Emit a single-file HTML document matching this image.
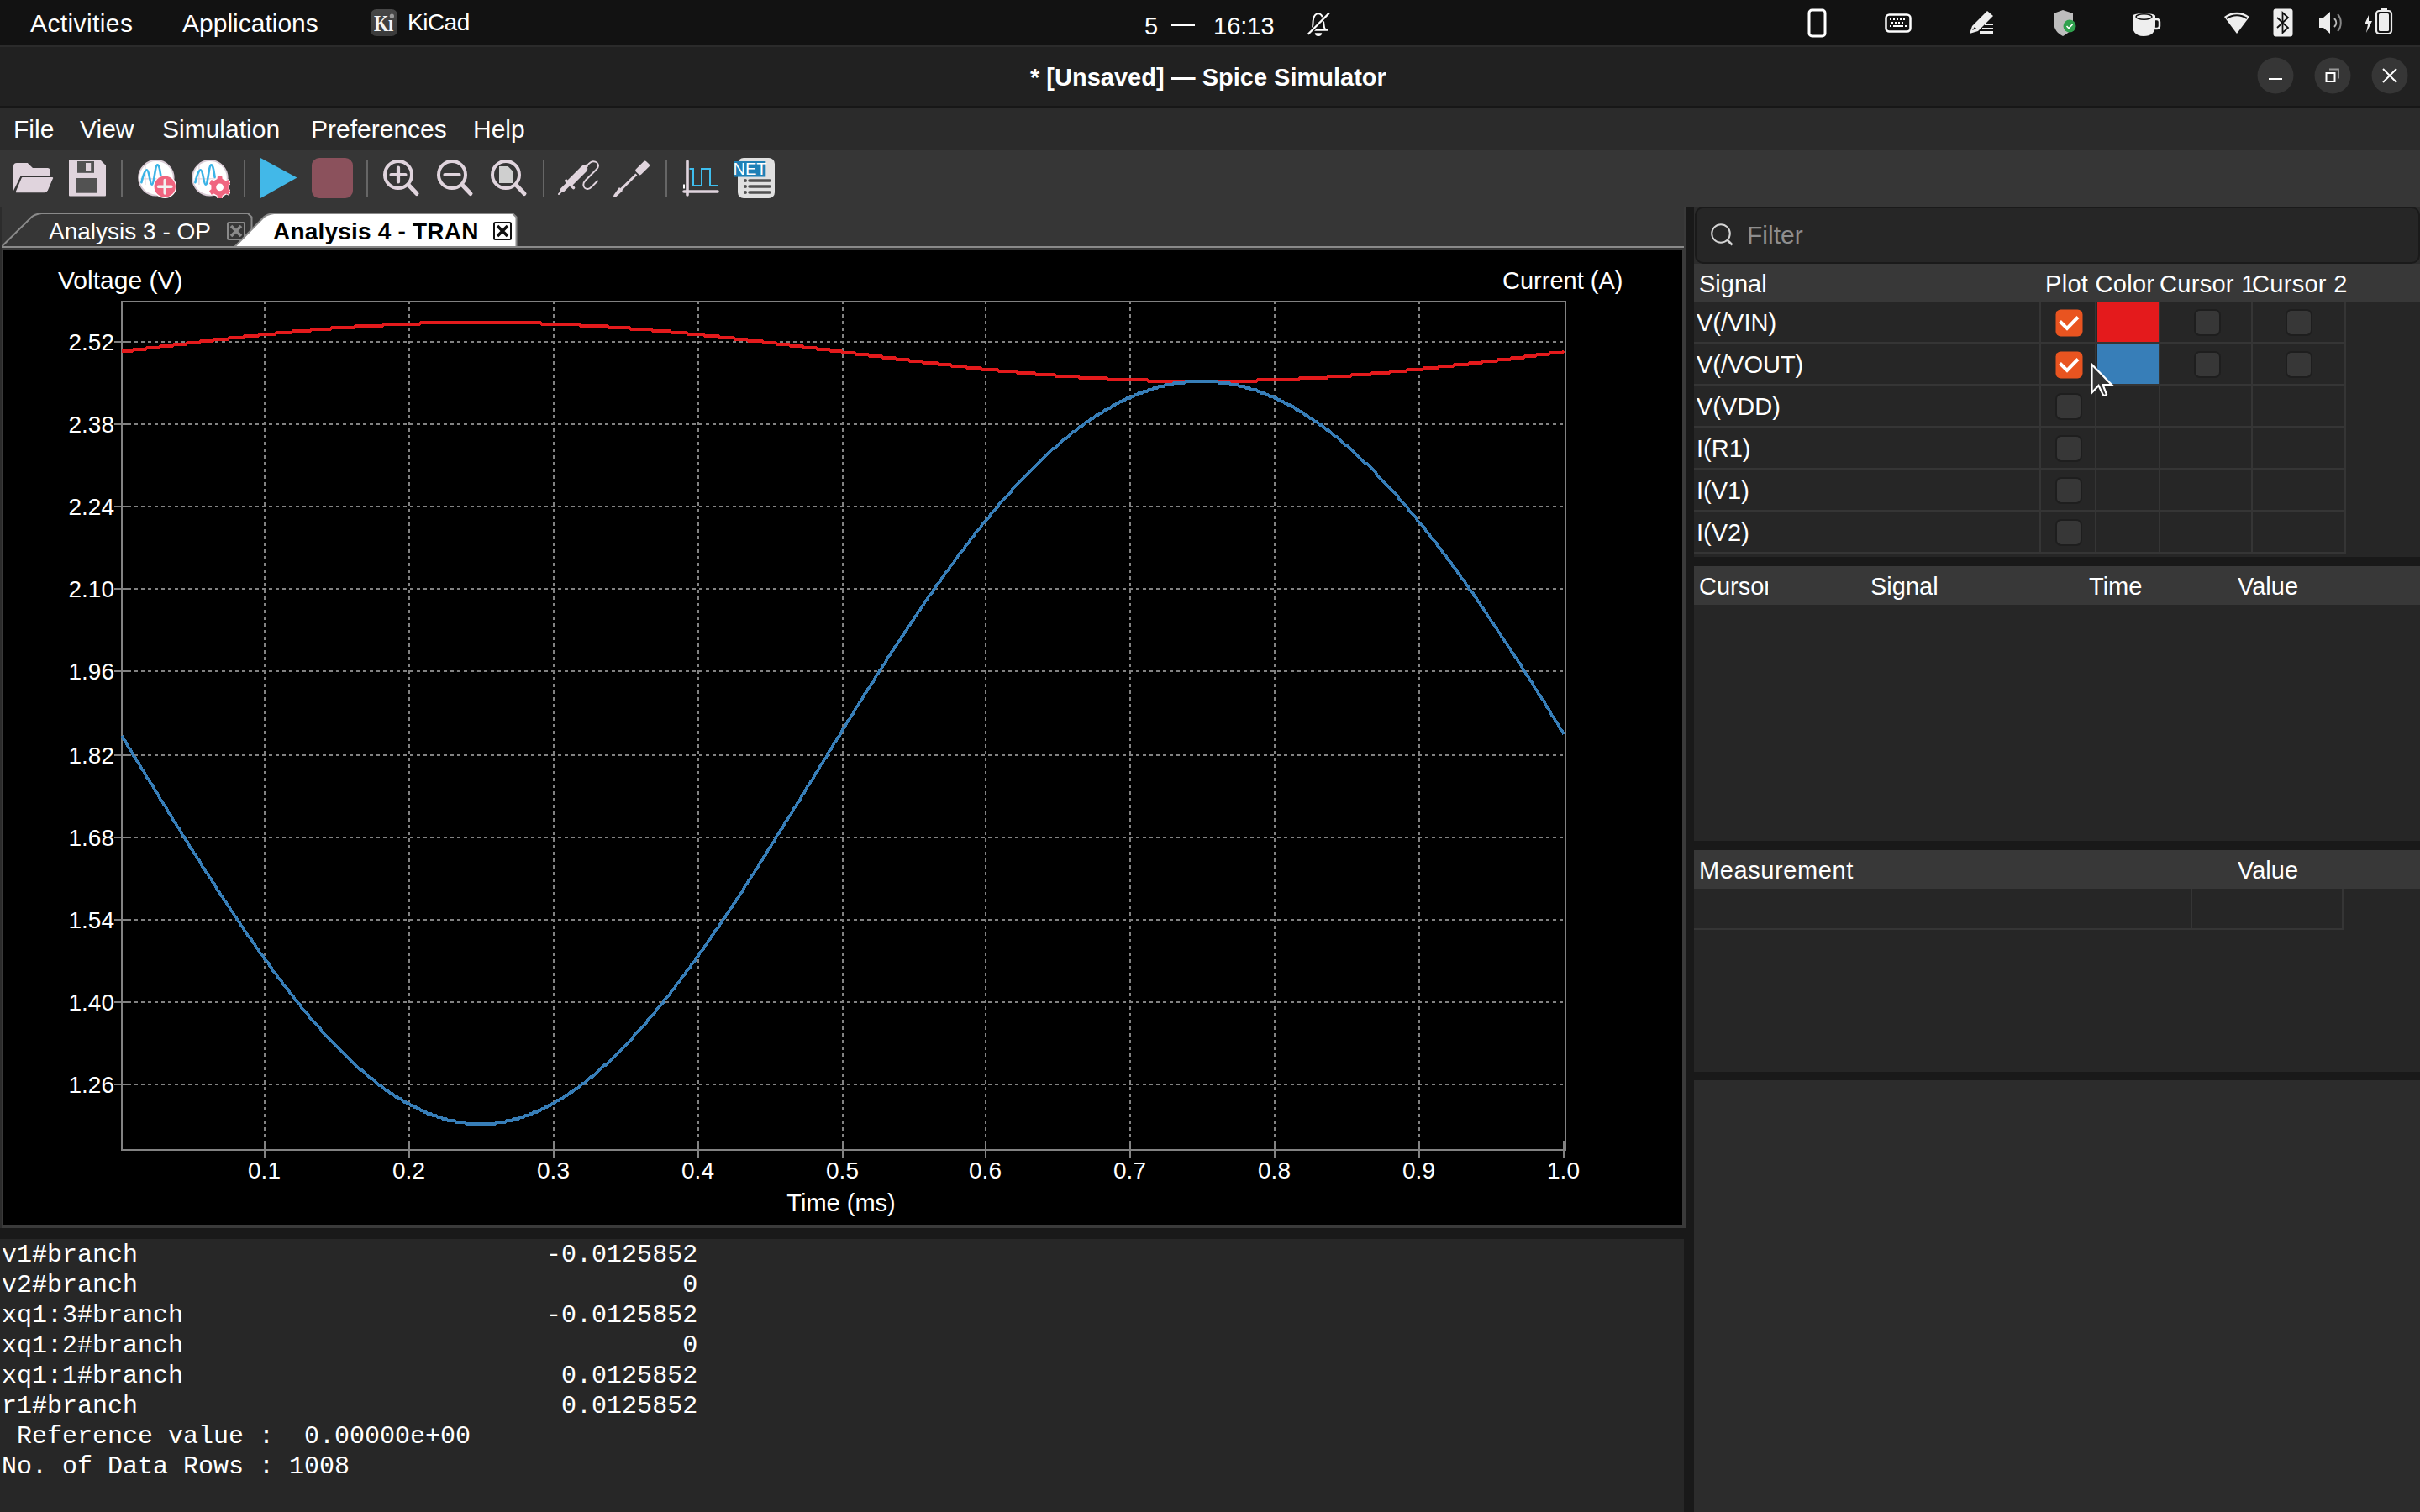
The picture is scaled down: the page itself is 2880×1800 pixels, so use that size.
<!DOCTYPE html><html><head><meta charset="utf-8"><style>html,body{margin:0;padding:0;width:2880px;height:1800px;overflow:hidden;background:#1b1b1b;position:relative}svg{position:absolute;overflow:visible}</style></head><body><div style="position:absolute;left:0px;top:0px;width:2880px;height:54px;background:#121212;"></div>
<div style="position:absolute;left:0px;top:54px;width:2880px;height:2px;background:#2b2b2b;"></div>
<div style="position:absolute;left:36px;top:12.6px;font-family:'Liberation Sans', sans-serif;font-size:30px;line-height:30px;color:#ffffff;font-weight:400;white-space:pre;letter-spacing:0.4px">Activities</div>
<div style="position:absolute;left:217px;top:12.6px;font-family:'Liberation Sans', sans-serif;font-size:30px;line-height:30px;color:#ffffff;font-weight:400;white-space:pre;">Applications</div>
<div style="position:absolute;left:441px;top:11px;width:32px;height:32px;border-radius:7px;background:linear-gradient(#474747,#3a3a3a)"></div>
<div style="position:absolute;left:445px;top:10.5px;font-family:'Liberation Serif',serif;font-size:28px;line-height:34px;font-weight:700;color:#f4f4f4;white-space:pre;transform:scaleX(0.8);transform-origin:0 0;letter-spacing:-0.5px">Kı</div>
<svg style="position:absolute;left:463px;top:16px;" width="7" height="7" viewBox="0 0 7 7"><circle cx="3.4" cy="3.2" r="2.6" fill="#9a9a9a"/></svg>
<div style="position:absolute;left:485px;top:13.3px;font-family:'Liberation Sans', sans-serif;font-size:28px;line-height:28px;color:#ffffff;font-weight:400;white-space:pre;letter-spacing:-0.5px">KiCad</div>
<div style="position:absolute;left:1362px;top:16.5px;font-family:'Liberation Sans', sans-serif;font-size:29px;line-height:29px;color:#ffffff;font-weight:400;white-space:pre;">5</div>
<div style="position:absolute;left:1394px;top:29px;width:28px;height:2px;background:#ffffff;"></div>
<div style="position:absolute;left:1444px;top:16.5px;font-family:'Liberation Sans', sans-serif;font-size:29px;line-height:29px;color:#ffffff;font-weight:400;white-space:pre;">16:13</div>
<svg style="position:absolute;left:1550px;top:8px;" width="40" height="40" viewBox="0 0 40 40"><path d="M11.5 27.6 C12.8 25 12 18 13.2 14 C14.2 10 16.5 8.2 18.8 8.2 C21.1 8.2 23.4 10 24.4 14 C25.6 18 25.2 25 27 26.6 C27.8 27.3 29.5 27.7 30.5 27.7 H11 Z" fill="none" stroke="#fff" stroke-width="2"/><path d="M14.8 31.3 H23.2 A4.2 3.6 0 0 1 14.8 31.3 Z" fill="#fff"/><line x1="6.7" y1="32.8" x2="31.8" y2="7.6" stroke="#121212" stroke-width="5"/><line x1="6.7" y1="32.8" x2="31.8" y2="7.6" stroke="#fff" stroke-width="2.2"/></svg>
<svg style="position:absolute;left:2150px;top:10px;" width="26" height="36" viewBox="0 0 26 36"><rect x="3" y="2" width="19" height="31" rx="3.5" fill="none" stroke="#fff" stroke-width="3"/></svg>
<svg style="position:absolute;left:2242px;top:15px;" width="34" height="26" viewBox="0 0 34 26"><rect x="2.5" y="2.5" width="29" height="20" rx="4" fill="none" stroke="#fff" stroke-width="2.5"/><g fill="#fff"><rect x="7" y="7" width="2" height="2"/><rect x="11" y="7" width="2" height="2"/><rect x="15" y="7" width="2" height="2"/><rect x="19" y="7" width="2" height="2"/><rect x="23" y="7" width="2" height="2"/><rect x="9" y="11" width="2" height="2"/><rect x="13" y="11" width="2" height="2"/><rect x="17" y="11" width="2" height="2"/><rect x="21" y="11" width="2" height="2"/><rect x="7" y="15" width="2" height="2"/><rect x="11" y="15" width="12" height="2"/><rect x="25" y="15" width="2" height="2"/></g></svg>
<svg style="position:absolute;left:2342px;top:11px;" width="34" height="32" viewBox="0 0 34 32"><path d="M2 29 L5 20 L23 2 L30 8 L12 26 Z" fill="#eee"/><path d="M5 25 l3 -4 l2 2z" fill="#121212"/><rect x="20" y="17" width="10" height="2" fill="#eee"/><rect x="17" y="22" width="13" height="2" fill="#eee"/><rect x="14" y="26" width="16" height="3" fill="#eee"/></svg>
<svg style="position:absolute;left:2441px;top:10px;" width="36" height="36" viewBox="0 0 36 36"><path d="M14 2 L26 6 V16 C26 25 20 30 14 33 C8 30 3 25 3 16 V6 Z" fill="#bdbdbd"/><circle cx="22" cy="21" r="7.5" fill="#30a14e"/><path d="M18.5 21 l2.5 2.5 l4.5 -4.5" fill="none" stroke="#fff" stroke-width="1.6"/></svg>
<svg style="position:absolute;left:2535px;top:12px;" width="40" height="34" viewBox="0 0 40 34"><path d="M3 7 C3 3 30 3 30 7 V18 C30 27 25 31 16 31 C8 31 3 27 3 18 Z" fill="#eee"/><rect x="27" y="11" width="8" height="11" rx="3" fill="none" stroke="#eee" stroke-width="2.5"/><ellipse cx="16.5" cy="8" rx="9.5" ry="3.2" fill="none" stroke="#121212" stroke-width="1.5"/></svg>
<svg style="position:absolute;left:2644px;top:13px;" width="36" height="30" viewBox="0 0 36 30"><path d="M18 27 L3 7 C12 0 24 0 33 7 Z" fill="#eee"/><path d="M6 9 C13 4 23 4 30 9" fill="none" stroke="#121212" stroke-width="2.2"/></svg>
<svg style="position:absolute;left:2704px;top:10px;" width="26" height="34" viewBox="0 0 26 34"><rect x="1.5" y="0.5" width="23" height="33" rx="3" fill="#eee"/><path d="M6 11 L19 23 L12.5 29 V5 L19 11 L6 23" fill="none" stroke="#121212" stroke-width="1.8"/></svg>
<svg style="position:absolute;left:2757px;top:12px;" width="34" height="30" viewBox="0 0 34 30"><path d="M3 9 H8 L16 2 V28 L8 21 H3 Z" fill="#eee"/><path d="M21 10 C24 13 24 17 21 20" fill="none" stroke="#bbb" stroke-width="2"/><path d="M25 5 C30 10 30 20 25 25" fill="none" stroke="#888" stroke-width="2"/></svg>
<svg style="position:absolute;left:2811px;top:9px;" width="38" height="34" viewBox="0 0 38 34"><path d="M8 9 L3 20 H7 L5 30 L12 16 H8 Z" fill="#eee"/><rect x="17" y="4" width="18" height="27" rx="3.5" fill="none" stroke="#eee" stroke-width="2.2"/><rect x="20" y="7" width="12" height="21" rx="1.5" fill="#eee"/><rect x="22" y="1" width="8" height="3" fill="#eee"/></svg>
<div style="position:absolute;left:0px;top:56px;width:2880px;height:70px;background:#212121;"></div>
<div style="position:absolute;left:0px;top:126px;width:2880px;height:2px;background:#171717;"></div>
<div style="position:absolute;left:1226px;top:77.5px;font-family:'Liberation Sans', sans-serif;font-size:29px;line-height:29px;color:#ffffff;font-weight:700;white-space:pre;">* [Unsaved] — Spice Simulator</div>
<svg style="position:absolute;left:2686px;top:68px;" width="44" height="44" viewBox="0 0 44 44"><circle cx="22" cy="22" r="21.5" fill="#363636"/><rect x="14" y="25" width="16" height="2" fill="#fff"/></svg>
<svg style="position:absolute;left:2754px;top:68px;" width="44" height="44" viewBox="0 0 44 44"><circle cx="22" cy="22" r="21.5" fill="#363636"/><path d="M18 14.5 H29 V25.5" fill="none" stroke="#999" stroke-width="1.8"/><rect x="14.5" y="19" width="10" height="10" fill="none" stroke="#fff" stroke-width="2"/></svg>
<svg style="position:absolute;left:2822px;top:68px;" width="44" height="44" viewBox="0 0 44 44"><circle cx="22" cy="22" r="21.5" fill="#363636"/><path d="M14 14 L30 30 M30 14 L14 30" stroke="#fff" stroke-width="2"/></svg>
<div style="position:absolute;left:0px;top:128px;width:2880px;height:50px;background:#2b2b2b;"></div>
<div style="position:absolute;left:16px;top:138.6px;font-family:'Liberation Sans', sans-serif;font-size:30px;line-height:30px;color:#ffffff;font-weight:400;white-space:pre;">File</div>
<div style="position:absolute;left:95px;top:138.6px;font-family:'Liberation Sans', sans-serif;font-size:30px;line-height:30px;color:#ffffff;font-weight:400;white-space:pre;">View</div>
<div style="position:absolute;left:193px;top:138.6px;font-family:'Liberation Sans', sans-serif;font-size:30px;line-height:30px;color:#ffffff;font-weight:400;white-space:pre;">Simulation</div>
<div style="position:absolute;left:370px;top:138.6px;font-family:'Liberation Sans', sans-serif;font-size:30px;line-height:30px;color:#ffffff;font-weight:400;white-space:pre;">Preferences</div>
<div style="position:absolute;left:563px;top:138.6px;font-family:'Liberation Sans', sans-serif;font-size:30px;line-height:30px;color:#ffffff;font-weight:400;white-space:pre;">Help</div>
<div style="position:absolute;left:0px;top:178px;width:2880px;height:68px;background:#363636;"></div>
<svg style="position:absolute;left:15px;top:192px;" width="52" height="40" viewBox="0 0 52 40"><path d="M1 6 Q1 2 5 2 H17.8 L24 8 H41.5 Q44.8 8 44.8 11.5 V17 H10 L1 35 Z" fill="#e0d4dd"/><path d="M11.5 18 H47 Q49.8 18 48.8 20.8 L42.5 35.5 Q41.2 38.2 38.2 38.2 H5 Q2.1 38.2 3.1 35.5 L9.2 20.8 Q10.3 18 11.5 18 Z" fill="#e0d4dd" stroke="#363636" stroke-width="1.9"/></svg>
<svg style="position:absolute;left:82px;top:190px;" width="46" height="46" viewBox="0 0 46 46"><path d="M0 1 Q0 0 1 0 H37 L44 7 V42.5 Q44 43.5 43 43.5 H1 Q0 43.5 0 42.5 Z" fill="#e0d4dd"/><rect x="10" y="2" width="20" height="13.8" fill="#525252"/><rect x="20" y="4" width="6.2" height="10" fill="#e0d4dd"/><rect x="8" y="22" width="26" height="17.7" fill="#525252"/></svg>
<div style="position:absolute;left:144px;top:190px;width:2px;height:44px;background:#666666;"></div>
<div style="position:absolute;left:290px;top:190px;width:2px;height:44px;background:#666666;"></div>
<div style="position:absolute;left:436px;top:190px;width:2px;height:44px;background:#666666;"></div>
<div style="position:absolute;left:646px;top:190px;width:2px;height:44px;background:#666666;"></div>
<div style="position:absolute;left:792px;top:190px;width:2px;height:44px;background:#666666;"></div>
<svg style="position:absolute;left:164px;top:190px;overflow:hidden" width="46" height="46" viewBox="0 0 46 46"><circle cx="21.9" cy="21.8" r="20.8" fill="#ffffff" stroke="#d9cbd5" stroke-width="1.8"/><path d="M3.4 22.8 H39 M8.9 6.4 V30" stroke="#e2d6de" stroke-width="1.3"/><path d="M4.4 27.2 C6.5 18 8.5 12.4 10.9 12.4 C13.6 12.4 14.4 29.7 16.8 29.7 C19.4 29.7 20.6 6.4 23.3 6.4 C25.6 6.4 26.6 14 27.6 21" fill="none" stroke="#3cb4e6" stroke-width="2.6" stroke-linecap="round"/><circle cx="32.2" cy="32.2" r="13.8" fill="#ffffff"/><circle cx="32.2" cy="32.2" r="12.6" fill="#f06580"/><path d="M32.2 24.5 V40 M24.5 32.2 H40" stroke="#f2f2f2" stroke-width="3.4" stroke-linecap="round"/></svg>
<svg style="position:absolute;left:228px;top:190px;overflow:hidden" width="46" height="46" viewBox="0 0 46 46"><circle cx="21.9" cy="21.8" r="20.8" fill="#ffffff" stroke="#d9cbd5" stroke-width="1.8"/><path d="M3.4 22.8 H39 M8.9 6.4 V30" stroke="#e2d6de" stroke-width="1.3"/><path d="M4.4 27.2 C6.5 18 8.5 12.4 10.9 12.4 C13.6 12.4 14.4 29.7 16.8 29.7 C19.4 29.7 20.6 6.4 23.3 6.4 C25.6 6.4 26.6 14 27.6 21" fill="none" stroke="#3cb4e6" stroke-width="2.6" stroke-linecap="round"/><polygon points="29.95,21.89 30.44,18.75 36.76,18.75 37.25,21.89 41.31,24.23 44.27,23.08 47.44,28.57 44.96,30.55 44.96,35.25 47.44,37.23 44.27,42.72 41.31,41.57 37.25,43.91 36.76,47.05 30.44,47.05 29.95,43.91 25.89,41.57 22.93,42.72 19.76,37.23 22.24,35.25 22.24,30.55 19.76,28.57 22.93,23.08 25.89,24.23" fill="#ffffff"/><polygon points="30.53,22.96 30.96,19.87 36.24,19.87 36.67,22.96 40.67,25.27 43.57,24.09 46.21,28.67 43.74,30.59 43.74,35.21 46.21,37.13 43.57,41.71 40.67,40.53 36.67,42.84 36.24,45.93 30.96,45.93 30.53,42.84 26.53,40.53 23.63,41.71 20.99,37.13 23.46,35.21 23.46,30.59 20.99,28.67 23.63,24.09 26.53,25.27" fill="#f06580"/><circle cx="33.6" cy="32.9" r="4.4" fill="#ffffff"/></svg>
<svg style="position:absolute;left:308px;top:186px;" width="48" height="52" viewBox="0 0 48 52"><path d="M2 2 L45.5 25.5 L2 50 Z" fill="#42b8e8"/></svg>
<div style="position:absolute;left:371px;top:188px;width:49px;height:48px;background:#8b515c;border-radius:9px"></div>
<svg style="position:absolute;left:454px;top:188px;" width="46" height="48" viewBox="0 0 46 48"><circle cx="20" cy="20" r="16" fill="none" stroke="#e0d4dd" stroke-width="4"/><path d="M32 32 L42 42.5" stroke="#e0d4dd" stroke-width="5" stroke-linecap="round"/><path d="M20 11.5 V28.5 M11.5 20 H28.5" stroke="#e0d4dd" stroke-width="4.2" stroke-linecap="round"/></svg>
<svg style="position:absolute;left:518px;top:188px;" width="46" height="48" viewBox="0 0 46 48"><circle cx="20" cy="20" r="16" fill="none" stroke="#e0d4dd" stroke-width="4"/><path d="M32 32 L42 42.5" stroke="#e0d4dd" stroke-width="5" stroke-linecap="round"/><path d="M11.5 20 H28.5" stroke="#e0d4dd" stroke-width="4.2" stroke-linecap="round"/></svg>
<svg style="position:absolute;left:582px;top:188px;" width="46" height="48" viewBox="0 0 46 48"><circle cx="20" cy="20" r="16" fill="none" stroke="#e0d4dd" stroke-width="4"/><path d="M32 32 L42 42.5" stroke="#e0d4dd" stroke-width="5" stroke-linecap="round"/><path d="M12 10 H22.5 L28 15.5 V30 H12 Z" fill="#cfcfcf"/></svg>
<svg style="position:absolute;left:662px;top:188px;" width="54" height="48" viewBox="0 0 54 48"><g stroke="#e0d4dd" fill="none"><path d="M3 43 L6.5 39.5" stroke-width="2" stroke-linecap="round"/><path d="M7.5 38 L14.5 31" stroke-width="5.5" stroke-linecap="round"/><path d="M11.8 27.2 L20.5 35.5" stroke-width="3.6" stroke-linecap="round"/><path d="M17.5 28.5 L33 13" stroke-width="8.5" stroke-linecap="round"/><path d="M33.5 12 L37 8.8" stroke-width="3.5"/><path d="M37 8.8 C40 5.5 42 4.3 44 4.3 C47.5 4.3 50 6.5 50 9.5 C50 11.5 49 12.5 47.5 14 L35 26.5 C33 28.5 32.3 30 32.3 32 C32.3 35 34.5 37 37.5 37 C39.5 37 40.5 36 42 34.5 L49 27.5" stroke-width="2" stroke-linecap="round"/></g></svg>
<svg style="position:absolute;left:728px;top:190px;" width="48" height="46" viewBox="0 0 48 46"><g fill="#e0d4dd"><rect x="28" y="5.45" width="17.3" height="8.9" rx="2.2" transform="rotate(-45 36.65 9.9)"/><path d="M28.3 16.4 L30.4 18.5 L11.8 36.9 L9.7 34.8 Z"/><path d="M9 33 L13 37 L5 44.5 Q3.5 45.5 2.5 44.5 Q1.5 43.5 2.5 42 Z"/></g></svg>
<svg style="position:absolute;left:808px;top:188px;" width="52" height="48" viewBox="0 0 52 48"><path d="M10 4 V44" stroke="#e0d4dd" stroke-width="3.6" stroke-linecap="round"/><path d="M6 40 H46" stroke="#e0d4dd" stroke-width="3.6" stroke-linecap="round"/><path d="M12.5 13 H17 V33 H27 V13 H37 V33 H46" fill="none" stroke="#3ebeee" stroke-width="2"/><rect x="5" y="31.5" width="2" height="5" fill="#ffffff"/></svg>
<svg style="position:absolute;left:872px;top:186px;" width="52" height="52" viewBox="0 0 52 52"><rect x="6" y="2" width="44" height="48" rx="7" fill="#e0e0e0"/><rect x="2" y="6" width="37.3" height="18.5" fill="#1e80b6"/><text x="20.5" y="22" text-anchor="middle" font-family="Liberation Sans" font-weight="400" font-size="20" fill="#ffffff">NET</text><g fill="#505050"><circle cx="15" cy="29" r="2"/><circle cx="15" cy="36" r="2"/><circle cx="15" cy="43" r="2"/></g><path d="M20 29 H44 M20 36 H44 M20 43 H44" stroke="#505050" stroke-width="3.6" stroke-linecap="round"/></svg>
<div style="position:absolute;left:0px;top:246px;width:2880px;height:1px;background:#2a2a2a;"></div>
<div style="position:absolute;left:0px;top:247px;width:2004px;height:50px;background:#363636;"></div>
<div style="position:absolute;left:0px;top:247px;width:2px;height:1228px;background:#2c2c2c;"></div>
<div style="position:absolute;left:2004px;top:247px;width:12px;height:1553px;background:#191919;"></div>
<div style="position:absolute;left:2004px;top:247px;width:2px;height:1215px;background:#3a3a3a;"></div>
<div style="position:absolute;left:0px;top:1462px;width:2004px;height:13px;background:#191919;"></div>
<svg style="position:absolute;left:0px;top:0px;top:0;left:0" width="2004" height="300" viewBox="0 0 2004 300"><path d="M2 294 H2004" stroke="#8a8a8a" stroke-width="2"/><path d="M2.5 293 L38 258 Q40.5 255.5 49.5 254 H295 L299.5 258.5 V293" fill="#363636" stroke="#8a8a8a" stroke-width="2"/><rect x="271" y="265" width="20" height="20" rx="1.5" fill="none" stroke="#8a8a8a" stroke-width="2"/><path d="M275 269 L287 281 M287 269 L275 281" stroke="#8a8a8a" stroke-width="3.6"/><path d="M279 294 L314.5 258 Q317 255.5 326 254 H610 L614.5 258.5 V294 Z" fill="#ffffff" stroke="#8a8a8a" stroke-width="2"/><rect x="588" y="265" width="20" height="20" rx="1.5" fill="#ffffff" stroke="#111" stroke-width="2"/><path d="M592 269 L604 281 M604 269 L592 281" stroke="#111" stroke-width="3.6"/></svg>
<div style="position:absolute;left:58px;top:262.3px;font-family:'Liberation Sans', sans-serif;font-size:28px;line-height:28px;color:#ffffff;font-weight:400;white-space:pre;">Analysis 3 - OP</div>
<div style="position:absolute;left:325px;top:262.3px;font-family:'Liberation Sans', sans-serif;font-size:28px;line-height:28px;color:#000000;font-weight:700;white-space:pre;letter-spacing:0.2px">Analysis 4 - TRAN</div>
<div style="position:absolute;left:2px;top:297px;width:2004px;height:1165px;background:#3a3a3a;"></div>
<div style="position:absolute;left:4px;top:298px;width:1998px;height:1160px;background:#000000;"></div>
<svg style="position:absolute;left:0px;top:0px;" width="2004" height="1475" viewBox="0 0 2004 1475"><line x1="315" y1="358" x2="315" y2="1368" stroke="#828282" stroke-width="2" stroke-dasharray="4 4" shape-rendering="crispEdges"/><line x1="487" y1="358" x2="487" y2="1368" stroke="#828282" stroke-width="2" stroke-dasharray="4 4" shape-rendering="crispEdges"/><line x1="659" y1="358" x2="659" y2="1368" stroke="#828282" stroke-width="2" stroke-dasharray="4 4" shape-rendering="crispEdges"/><line x1="831" y1="358" x2="831" y2="1368" stroke="#828282" stroke-width="2" stroke-dasharray="4 4" shape-rendering="crispEdges"/><line x1="1003" y1="358" x2="1003" y2="1368" stroke="#828282" stroke-width="2" stroke-dasharray="4 4" shape-rendering="crispEdges"/><line x1="1173" y1="358" x2="1173" y2="1368" stroke="#828282" stroke-width="2" stroke-dasharray="4 4" shape-rendering="crispEdges"/><line x1="1345" y1="358" x2="1345" y2="1368" stroke="#828282" stroke-width="2" stroke-dasharray="4 4" shape-rendering="crispEdges"/><line x1="1517" y1="358" x2="1517" y2="1368" stroke="#828282" stroke-width="2" stroke-dasharray="4 4" shape-rendering="crispEdges"/><line x1="1689" y1="358" x2="1689" y2="1368" stroke="#828282" stroke-width="2" stroke-dasharray="4 4" shape-rendering="crispEdges"/><line x1="144" y1="407" x2="1862" y2="407" stroke="#828282" stroke-width="2" stroke-dasharray="4 4" shape-rendering="crispEdges"/><line x1="136" y1="407" x2="156" y2="407" stroke="#828282" stroke-width="2" shape-rendering="crispEdges"/><line x1="144" y1="505" x2="1862" y2="505" stroke="#828282" stroke-width="2" stroke-dasharray="4 4" shape-rendering="crispEdges"/><line x1="136" y1="505" x2="156" y2="505" stroke="#828282" stroke-width="2" shape-rendering="crispEdges"/><line x1="144" y1="603" x2="1862" y2="603" stroke="#828282" stroke-width="2" stroke-dasharray="4 4" shape-rendering="crispEdges"/><line x1="136" y1="603" x2="156" y2="603" stroke="#828282" stroke-width="2" shape-rendering="crispEdges"/><line x1="144" y1="701" x2="1862" y2="701" stroke="#828282" stroke-width="2" stroke-dasharray="4 4" shape-rendering="crispEdges"/><line x1="136" y1="701" x2="156" y2="701" stroke="#828282" stroke-width="2" shape-rendering="crispEdges"/><line x1="144" y1="799" x2="1862" y2="799" stroke="#828282" stroke-width="2" stroke-dasharray="4 4" shape-rendering="crispEdges"/><line x1="136" y1="799" x2="156" y2="799" stroke="#828282" stroke-width="2" shape-rendering="crispEdges"/><line x1="144" y1="899" x2="1862" y2="899" stroke="#828282" stroke-width="2" stroke-dasharray="4 4" shape-rendering="crispEdges"/><line x1="136" y1="899" x2="156" y2="899" stroke="#828282" stroke-width="2" shape-rendering="crispEdges"/><line x1="144" y1="997" x2="1862" y2="997" stroke="#828282" stroke-width="2" stroke-dasharray="4 4" shape-rendering="crispEdges"/><line x1="136" y1="997" x2="156" y2="997" stroke="#828282" stroke-width="2" shape-rendering="crispEdges"/><line x1="144" y1="1095" x2="1862" y2="1095" stroke="#828282" stroke-width="2" stroke-dasharray="4 4" shape-rendering="crispEdges"/><line x1="136" y1="1095" x2="156" y2="1095" stroke="#828282" stroke-width="2" shape-rendering="crispEdges"/><line x1="144" y1="1193" x2="1862" y2="1193" stroke="#828282" stroke-width="2" stroke-dasharray="4 4" shape-rendering="crispEdges"/><line x1="136" y1="1193" x2="156" y2="1193" stroke="#828282" stroke-width="2" shape-rendering="crispEdges"/><line x1="144" y1="1291" x2="1862" y2="1291" stroke="#828282" stroke-width="2" stroke-dasharray="4 4" shape-rendering="crispEdges"/><line x1="136" y1="1291" x2="156" y2="1291" stroke="#828282" stroke-width="2" shape-rendering="crispEdges"/><line x1="315" y1="1358" x2="315" y2="1378" stroke="#828282" stroke-width="2" shape-rendering="crispEdges"/><line x1="487" y1="1358" x2="487" y2="1378" stroke="#828282" stroke-width="2" shape-rendering="crispEdges"/><line x1="659" y1="1358" x2="659" y2="1378" stroke="#828282" stroke-width="2" shape-rendering="crispEdges"/><line x1="831" y1="1358" x2="831" y2="1378" stroke="#828282" stroke-width="2" shape-rendering="crispEdges"/><line x1="1003" y1="1358" x2="1003" y2="1378" stroke="#828282" stroke-width="2" shape-rendering="crispEdges"/><line x1="1173" y1="1358" x2="1173" y2="1378" stroke="#828282" stroke-width="2" shape-rendering="crispEdges"/><line x1="1345" y1="1358" x2="1345" y2="1378" stroke="#828282" stroke-width="2" shape-rendering="crispEdges"/><line x1="1517" y1="1358" x2="1517" y2="1378" stroke="#828282" stroke-width="2" shape-rendering="crispEdges"/><line x1="1689" y1="1358" x2="1689" y2="1378" stroke="#828282" stroke-width="2" shape-rendering="crispEdges"/><line x1="1861" y1="1358" x2="1861" y2="1378" stroke="#828282" stroke-width="2" shape-rendering="crispEdges"/><rect x="145" y="359" width="1718" height="1010" fill="none" stroke="#828282" stroke-width="2" shape-rendering="crispEdges"/><polyline points="145,418 147,418 149,418 151,418 153,418 155,418 157,418 159,416 161,416 163,416 165,416 167,416 169,416 171,416 173,416 175,414 177,414 179,414 181,414 183,414 185,414 187,414 189,414 191,412 193,412 195,412 197,412 199,412 201,412 203,412 205,412 207,410 209,410 211,410 213,410 215,410 217,410 219,410 221,410 223,408 225,408 227,408 229,408 231,408 233,408 235,408 237,408 239,406 241,406 243,406 245,406 247,406 249,406 251,406 253,406 255,404 257,404 259,404 261,404 263,404 265,404 267,404 269,404 271,404 273,402 275,402 277,402 279,402 281,402 283,402 285,402 287,402 289,402 291,400 293,400 295,400 297,400 299,400 301,400 303,400 305,400 307,400 309,398 311,398 313,398 315,398 317,398 319,398 321,398 323,398 325,398 327,398 329,396 331,396 333,396 335,396 337,396 339,396 341,396 343,396 345,396 347,396 349,394 351,394 353,394 355,394 357,394 359,394 361,394 363,394 365,394 367,394 369,394 371,392 373,392 375,392 377,392 379,392 381,392 383,392 385,392 387,392 389,392 391,392 393,392 395,390 397,390 399,390 401,390 403,390 405,390 407,390 409,390 411,390 413,390 415,390 417,390 419,390 421,390 423,388 425,388 427,388 429,388 431,388 433,388 435,388 437,388 439,388 441,388 443,388 445,388 447,388 449,388 451,388 453,388 455,388 457,386 459,386 461,386 463,386 465,386 467,386 469,386 471,386 473,386 475,386 477,386 479,386 481,386 483,386 485,386 487,386 489,386 491,386 493,386 495,386 497,386 499,386 501,384 503,384 505,384 507,384 509,384 511,384 513,384 515,384 517,384 519,384 521,384 523,384 525,384 527,384 529,384 531,384 533,384 535,384 537,384 539,384 541,384 543,384 545,384 547,384 549,384 551,384 553,384 555,384 557,384 559,384 561,384 563,384 565,384 567,384 569,384 571,384 573,384 575,384 577,384 579,384 581,384 583,384 585,384 587,384 589,384 591,384 593,384 595,384 597,384 599,384 601,384 603,384 605,384 607,384 609,384 611,384 613,384 615,384 617,384 619,384 621,384 623,384 625,384 627,384 629,384 631,384 633,384 635,384 637,384 639,384 641,384 643,384 645,386 647,386 649,386 651,386 653,386 655,386 657,386 659,386 661,386 663,386 665,386 667,386 669,386 671,386 673,386 675,386 677,386 679,386 681,386 683,386 685,386 687,386 689,386 691,388 693,388 695,388 697,388 699,388 701,388 703,388 705,388 707,388 709,388 711,388 713,388 715,388 717,388 719,388 721,388 723,388 725,390 727,390 729,390 731,390 733,390 735,390 737,390 739,390 741,390 743,390 745,390 747,390 749,390 751,392 753,392 755,392 757,392 759,392 761,392 763,392 765,392 767,392 769,392 771,392 773,392 775,392 777,394 779,394 781,394 783,394 785,394 787,394 789,394 791,394 793,394 795,394 797,394 799,396 801,396 803,396 805,396 807,396 809,396 811,396 813,396 815,396 817,396 819,398 821,398 823,398 825,398 827,398 829,398 831,398 833,398 835,398 837,398 839,400 841,400 843,400 845,400 847,400 849,400 851,400 853,400 855,400 857,402 859,402 861,402 863,402 865,402 867,402 869,402 871,402 873,402 875,404 877,404 879,404 881,404 883,404 885,404 887,404 889,404 891,406 893,406 895,406 897,406 899,406 901,406 903,406 905,406 907,406 909,408 911,408 913,408 915,408 917,408 919,408 921,408 923,408 925,410 927,410 929,410 931,410 933,410 935,410 937,410 939,410 941,412 943,412 945,412 947,412 949,412 951,412 953,412 955,412 957,414 959,414 961,414 963,414 965,414 967,414 969,414 971,414 973,416 975,416 977,416 979,416 981,416 983,416 985,416 987,416 989,418 991,418 993,418 995,418 997,418 999,418 1001,418 1003,420 1005,420 1007,420 1009,420 1011,420 1013,420 1015,420 1017,420 1019,422 1021,422 1023,422 1025,422 1027,422 1029,422 1031,422 1033,422 1035,424 1037,424 1039,424 1041,424 1043,424 1045,424 1047,424 1049,424 1051,426 1053,426 1055,426 1057,426 1059,426 1061,426 1063,426 1065,426 1067,428 1069,428 1071,428 1073,428 1075,428 1077,428 1079,428 1081,428 1083,430 1085,430 1087,430 1089,430 1091,430 1093,430 1095,430 1097,430 1099,432 1101,432 1103,432 1105,432 1107,432 1109,432 1111,432 1113,432 1115,432 1117,434 1119,434 1121,434 1123,434 1125,434 1127,434 1129,434 1131,434 1133,436 1135,436 1137,436 1139,436 1141,436 1143,436 1145,436 1147,436 1149,436 1151,438 1153,438 1155,438 1157,438 1159,438 1161,438 1163,438 1165,438 1167,438 1169,440 1171,440 1173,440 1175,440 1177,440 1179,440 1181,440 1183,440 1185,440 1187,440 1189,442 1191,442 1193,442 1195,442 1197,442 1199,442 1201,442 1203,442 1205,442 1207,442 1209,442 1211,444 1213,444 1215,444 1217,444 1219,444 1221,444 1223,444 1225,444 1227,444 1229,444 1231,444 1233,446 1235,446 1237,446 1239,446 1241,446 1243,446 1245,446 1247,446 1249,446 1251,446 1253,446 1255,446 1257,448 1259,448 1261,448 1263,448 1265,448 1267,448 1269,448 1271,448 1273,448 1275,448 1277,448 1279,448 1281,448 1283,448 1285,450 1287,450 1289,450 1291,450 1293,450 1295,450 1297,450 1299,450 1301,450 1303,450 1305,450 1307,450 1309,450 1311,450 1313,450 1315,450 1317,450 1319,452 1321,452 1323,452 1325,452 1327,452 1329,452 1331,452 1333,452 1335,452 1337,452 1339,452 1341,452 1343,452 1345,452 1347,452 1349,452 1351,452 1353,452 1355,452 1357,452 1359,452 1361,452 1363,452 1365,452 1367,454 1369,454 1371,454 1373,454 1375,454 1377,454 1379,454 1381,454 1383,454 1385,454 1387,454 1389,454 1391,454 1393,454 1395,454 1397,454 1399,454 1401,454 1403,454 1405,454 1407,454 1409,454 1411,454 1413,454 1415,454 1417,454 1419,454 1421,454 1423,454 1425,454 1427,454 1429,454 1431,454 1433,454 1435,454 1437,454 1439,454 1441,454 1443,454 1445,454 1447,454 1449,454 1451,454 1453,454 1455,454 1457,454 1459,454 1461,454 1463,454 1465,454 1467,454 1469,454 1471,454 1473,454 1475,454 1477,454 1479,454 1481,454 1483,454 1485,454 1487,454 1489,454 1491,454 1493,454 1495,454 1497,452 1499,452 1501,452 1503,452 1505,452 1507,452 1509,452 1511,452 1513,452 1515,452 1517,452 1519,452 1521,452 1523,452 1525,452 1527,452 1529,452 1531,452 1533,452 1535,452 1537,452 1539,452 1541,452 1543,452 1545,452 1547,450 1549,450 1551,450 1553,450 1555,450 1557,450 1559,450 1561,450 1563,450 1565,450 1567,450 1569,450 1571,450 1573,450 1575,450 1577,450 1579,450 1581,448 1583,448 1585,448 1587,448 1589,448 1591,448 1593,448 1595,448 1597,448 1599,448 1601,448 1603,448 1605,448 1607,448 1609,446 1611,446 1613,446 1615,446 1617,446 1619,446 1621,446 1623,446 1625,446 1627,446 1629,446 1631,446 1633,444 1635,444 1637,444 1639,444 1641,444 1643,444 1645,444 1647,444 1649,444 1651,444 1653,444 1655,442 1657,442 1659,442 1661,442 1663,442 1665,442 1667,442 1669,442 1671,442 1673,442 1675,440 1677,440 1679,440 1681,440 1683,440 1685,440 1687,440 1689,440 1691,440 1693,440 1695,438 1697,438 1699,438 1701,438 1703,438 1705,438 1707,438 1709,438 1711,438 1713,436 1715,436 1717,436 1719,436 1721,436 1723,436 1725,436 1727,436 1729,436 1731,434 1733,434 1735,434 1737,434 1739,434 1741,434 1743,434 1745,434 1747,434 1749,432 1751,432 1753,432 1755,432 1757,432 1759,432 1761,432 1763,432 1765,430 1767,430 1769,430 1771,430 1773,430 1775,430 1777,430 1779,430 1781,430 1783,428 1785,428 1787,428 1789,428 1791,428 1793,428 1795,428 1797,428 1799,426 1801,426 1803,426 1805,426 1807,426 1809,426 1811,426 1813,426 1815,424 1817,424 1819,424 1821,424 1823,424 1825,424 1827,424 1829,422 1831,422 1833,422 1835,422 1837,422 1839,422 1841,422 1843,422 1845,420 1847,420 1849,420 1851,420 1853,420 1855,420 1857,420 1859,420 1861,418" fill="none" stroke="#e41a1c" stroke-width="4" shape-rendering="crispEdges"/><polyline points="145,876 147,880 149,882 151,886 153,890 155,892 157,896 159,900 161,902 163,906 165,908 167,912 169,916 171,918 173,922 175,926 177,928 179,932 181,934 183,938 185,942 187,944 189,948 191,952 193,954 195,958 197,960 199,964 201,968 203,970 205,974 207,978 209,980 211,984 213,986 215,990 217,994 219,996 221,1000 223,1002 225,1006 227,1010 229,1012 231,1016 233,1018 235,1022 237,1024 239,1028 241,1032 243,1034 245,1038 247,1040 249,1044 251,1046 253,1050 255,1052 257,1056 259,1060 261,1062 263,1066 265,1068 267,1072 269,1074 271,1078 273,1080 275,1084 277,1086 279,1090 281,1092 283,1096 285,1098 287,1102 289,1104 291,1108 293,1110 295,1114 297,1116 299,1118 301,1122 303,1124 305,1128 307,1130 309,1134 311,1136 313,1138 315,1142 317,1144 319,1146 321,1150 323,1152 325,1156 327,1158 329,1160 331,1164 333,1166 335,1168 337,1172 339,1174 341,1176 343,1178 345,1182 347,1184 349,1186 351,1190 353,1192 355,1194 357,1196 359,1200 361,1202 363,1204 365,1206 367,1208 369,1212 371,1214 373,1216 375,1218 377,1220 379,1222 381,1224 383,1228 385,1230 387,1232 389,1234 391,1236 393,1238 395,1240 397,1242 399,1244 401,1246 403,1248 405,1250 407,1252 409,1254 411,1256 413,1258 415,1260 417,1262 419,1264 421,1266 423,1268 425,1270 427,1272 429,1274 431,1274 433,1276 435,1278 437,1280 439,1282 441,1284 443,1284 445,1286 447,1288 449,1290 451,1292 453,1292 455,1294 457,1296 459,1298 461,1298 463,1300 465,1302 467,1302 469,1304 471,1306 473,1306 475,1308 477,1308 479,1310 481,1312 483,1312 485,1314 487,1314 489,1316 491,1316 493,1318 495,1318 497,1320 499,1320 501,1322 503,1322 505,1324 507,1324 509,1326 511,1326 513,1326 515,1328 517,1328 519,1328 521,1330 523,1330 525,1330 527,1332 529,1332 531,1332 533,1334 535,1334 537,1334 539,1334 541,1334 543,1336 545,1336 547,1336 549,1336 551,1336 553,1336 555,1338 557,1338 559,1338 561,1338 563,1338 565,1338 567,1338 569,1338 571,1338 573,1338 575,1338 577,1338 579,1338 581,1338 583,1338 585,1338 587,1338 589,1338 591,1336 593,1336 595,1336 597,1336 599,1336 601,1336 603,1334 605,1334 607,1334 609,1334 611,1332 613,1332 615,1332 617,1332 619,1330 621,1330 623,1330 625,1328 627,1328 629,1328 631,1326 633,1326 635,1324 637,1324 639,1324 641,1322 643,1322 645,1320 647,1320 649,1318 651,1318 653,1316 655,1316 657,1314 659,1314 661,1312 663,1310 665,1310 667,1308 669,1308 671,1306 673,1304 675,1304 677,1302 679,1300 681,1300 683,1298 685,1296 687,1296 689,1294 691,1292 693,1290 695,1290 697,1288 699,1286 701,1284 703,1282 705,1282 707,1280 709,1278 711,1276 713,1274 715,1272 717,1270 719,1268 721,1268 723,1266 725,1264 727,1262 729,1260 731,1258 733,1256 735,1254 737,1252 739,1250 741,1248 743,1246 745,1244 747,1242 749,1240 751,1238 753,1236 755,1232 757,1230 759,1228 761,1226 763,1224 765,1222 767,1220 769,1218 771,1214 773,1212 775,1210 777,1208 779,1206 781,1202 783,1200 785,1198 787,1196 789,1194 791,1190 793,1188 795,1186 797,1184 799,1180 801,1178 803,1176 805,1172 807,1170 809,1168 811,1164 813,1162 815,1160 817,1156 819,1154 821,1152 823,1148 825,1146 827,1144 829,1140 831,1138 833,1134 835,1132 837,1130 839,1126 841,1124 843,1120 845,1118 847,1114 849,1112 851,1108 853,1106 855,1104 857,1100 859,1098 861,1094 863,1092 865,1088 867,1086 869,1082 871,1080 873,1076 875,1074 877,1070 879,1068 881,1064 883,1062 885,1058 887,1054 889,1052 891,1048 893,1046 895,1042 897,1040 899,1036 901,1034 903,1030 905,1026 907,1024 909,1020 911,1018 913,1014 915,1010 917,1008 919,1004 921,1002 923,998 925,994 927,992 929,988 931,986 933,982 935,978 937,976 939,972 941,970 943,966 945,962 947,960 949,956 951,954 953,950 955,946 957,944 959,940 961,936 963,934 965,930 967,928 969,924 971,920 973,918 975,914 977,910 979,908 981,904 983,902 985,898 987,894 989,892 991,888 993,884 995,882 997,878 999,876 1001,872 1003,868 1005,866 1007,862 1009,858 1011,856 1013,852 1015,850 1017,846 1019,842 1021,840 1023,836 1025,834 1027,830 1029,826 1031,824 1033,820 1035,818 1037,814 1039,812 1041,808 1043,804 1045,802 1047,798 1049,796 1051,792 1053,790 1055,786 1057,782 1059,780 1061,776 1063,774 1065,770 1067,768 1069,764 1071,762 1073,758 1075,756 1077,752 1079,750 1081,746 1083,744 1085,740 1087,738 1089,734 1091,732 1093,728 1095,726 1097,722 1099,720 1101,716 1103,714 1105,710 1107,708 1109,706 1111,702 1113,700 1115,696 1117,694 1119,692 1121,688 1123,686 1125,682 1127,680 1129,678 1131,674 1133,672 1135,670 1137,666 1139,664 1141,660 1143,658 1145,656 1147,654 1149,650 1151,648 1153,646 1155,642 1157,640 1159,638 1161,634 1163,632 1165,630 1167,628 1169,624 1171,622 1173,620 1175,618 1177,616 1179,612 1181,610 1183,608 1185,606 1187,604 1189,600 1191,598 1193,596 1195,594 1197,592 1199,590 1201,588 1203,586 1205,582 1207,580 1209,578 1211,576 1213,574 1215,572 1217,570 1219,568 1221,566 1223,564 1225,562 1227,560 1229,558 1231,556 1233,554 1235,552 1237,550 1239,548 1241,546 1243,544 1245,542 1247,540 1249,538 1251,536 1253,534 1255,534 1257,532 1259,530 1261,528 1263,526 1265,524 1267,522 1269,522 1271,520 1273,518 1275,516 1277,514 1279,514 1281,512 1283,510 1285,508 1287,508 1289,506 1291,504 1293,502 1295,502 1297,500 1299,498 1301,498 1303,496 1305,494 1307,494 1309,492 1311,492 1313,490 1315,488 1317,488 1319,486 1321,486 1323,484 1325,482 1327,482 1329,480 1331,480 1333,478 1335,478 1337,476 1339,476 1341,474 1343,474 1345,474 1347,472 1349,472 1351,470 1353,470 1355,468 1357,468 1359,468 1361,466 1363,466 1365,466 1367,464 1369,464 1371,464 1373,462 1375,462 1377,462 1379,460 1381,460 1383,460 1385,460 1387,458 1389,458 1391,458 1393,458 1395,458 1397,456 1399,456 1401,456 1403,456 1405,456 1407,456 1409,456 1411,454 1413,454 1415,454 1417,454 1419,454 1421,454 1423,454 1425,454 1427,454 1429,454 1431,454 1433,454 1435,454 1437,454 1439,454 1441,454 1443,454 1445,454 1447,454 1449,454 1451,456 1453,456 1455,456 1457,456 1459,456 1461,456 1463,456 1465,458 1467,458 1469,458 1471,458 1473,458 1475,460 1477,460 1479,460 1481,460 1483,462 1485,462 1487,462 1489,464 1491,464 1493,464 1495,464 1497,466 1499,466 1501,468 1503,468 1505,468 1507,470 1509,470 1511,472 1513,472 1515,472 1517,474 1519,474 1521,476 1523,476 1525,478 1527,478 1529,480 1531,480 1533,482 1535,482 1537,484 1539,484 1541,486 1543,488 1545,488 1547,490 1549,490 1551,492 1553,494 1555,494 1557,496 1559,498 1561,498 1563,500 1565,502 1567,502 1569,504 1571,506 1573,506 1575,508 1577,510 1579,512 1581,512 1583,514 1585,516 1587,518 1589,520 1591,520 1593,522 1595,524 1597,526 1599,528 1601,530 1603,530 1605,532 1607,534 1609,536 1611,538 1613,540 1615,542 1617,544 1619,546 1621,548 1623,550 1625,552 1627,552 1629,554 1631,556 1633,558 1635,560 1637,562 1639,566 1641,568 1643,570 1645,572 1647,574 1649,576 1651,578 1653,580 1655,582 1657,584 1659,586 1661,588 1663,590 1665,594 1667,596 1669,598 1671,600 1673,602 1675,604 1677,608 1679,610 1681,612 1683,614 1685,616 1687,620 1689,622 1691,624 1693,626 1695,628 1697,632 1699,634 1701,636 1703,640 1705,642 1707,644 1709,646 1711,650 1713,652 1715,654 1717,658 1719,660 1721,662 1723,666 1725,668 1727,670 1729,674 1731,676 1733,678 1735,682 1737,684 1739,688 1741,690 1743,692 1745,696 1747,698 1749,702 1751,704 1753,706 1755,710 1757,712 1759,716 1761,718 1763,722 1765,724 1767,728 1769,730 1771,734 1773,736 1775,740 1777,742 1779,746 1781,748 1783,752 1785,754 1787,758 1789,760 1791,764 1793,766 1795,770 1797,772 1799,776 1801,778 1803,782 1805,784 1807,788 1809,790 1811,794 1813,798 1815,800 1817,804 1819,806 1821,810 1823,812 1825,816 1827,820 1829,822 1831,826 1833,828 1835,832 1837,834 1839,838 1841,842 1843,844 1845,848 1847,852 1849,854 1851,858 1853,860 1855,864 1857,868 1859,870 1861,874" fill="none" stroke="#377eb8" stroke-width="4" shape-rendering="crispEdges"/></svg>
<div style="position:absolute;left:40px;width:96px;text-align:right;top:394.3px;font-family:'Liberation Sans', sans-serif;font-size:28px;line-height:28px;color:#fff;white-space:pre">2.52</div>
<div style="position:absolute;left:40px;width:96px;text-align:right;top:492.3px;font-family:'Liberation Sans', sans-serif;font-size:28px;line-height:28px;color:#fff;white-space:pre">2.38</div>
<div style="position:absolute;left:40px;width:96px;text-align:right;top:590.3px;font-family:'Liberation Sans', sans-serif;font-size:28px;line-height:28px;color:#fff;white-space:pre">2.24</div>
<div style="position:absolute;left:40px;width:96px;text-align:right;top:688.3px;font-family:'Liberation Sans', sans-serif;font-size:28px;line-height:28px;color:#fff;white-space:pre">2.10</div>
<div style="position:absolute;left:40px;width:96px;text-align:right;top:786.3px;font-family:'Liberation Sans', sans-serif;font-size:28px;line-height:28px;color:#fff;white-space:pre">1.96</div>
<div style="position:absolute;left:40px;width:96px;text-align:right;top:886.3px;font-family:'Liberation Sans', sans-serif;font-size:28px;line-height:28px;color:#fff;white-space:pre">1.82</div>
<div style="position:absolute;left:40px;width:96px;text-align:right;top:984.3px;font-family:'Liberation Sans', sans-serif;font-size:28px;line-height:28px;color:#fff;white-space:pre">1.68</div>
<div style="position:absolute;left:40px;width:96px;text-align:right;top:1082.3px;font-family:'Liberation Sans', sans-serif;font-size:28px;line-height:28px;color:#fff;white-space:pre">1.54</div>
<div style="position:absolute;left:40px;width:96px;text-align:right;top:1180.3px;font-family:'Liberation Sans', sans-serif;font-size:28px;line-height:28px;color:#fff;white-space:pre">1.40</div>
<div style="position:absolute;left:40px;width:96px;text-align:right;top:1278.3px;font-family:'Liberation Sans', sans-serif;font-size:28px;line-height:28px;color:#fff;white-space:pre">1.26</div>
<div style="position:absolute;left:264.5px;width:100px;text-align:center;top:1380.3px;font-family:'Liberation Sans', sans-serif;font-size:28px;line-height:28px;color:#fff;white-space:pre">0.1</div>
<div style="position:absolute;left:436.5px;width:100px;text-align:center;top:1380.3px;font-family:'Liberation Sans', sans-serif;font-size:28px;line-height:28px;color:#fff;white-space:pre">0.2</div>
<div style="position:absolute;left:608.5px;width:100px;text-align:center;top:1380.3px;font-family:'Liberation Sans', sans-serif;font-size:28px;line-height:28px;color:#fff;white-space:pre">0.3</div>
<div style="position:absolute;left:780.5px;width:100px;text-align:center;top:1380.3px;font-family:'Liberation Sans', sans-serif;font-size:28px;line-height:28px;color:#fff;white-space:pre">0.4</div>
<div style="position:absolute;left:952.5px;width:100px;text-align:center;top:1380.3px;font-family:'Liberation Sans', sans-serif;font-size:28px;line-height:28px;color:#fff;white-space:pre">0.5</div>
<div style="position:absolute;left:1122.5px;width:100px;text-align:center;top:1380.3px;font-family:'Liberation Sans', sans-serif;font-size:28px;line-height:28px;color:#fff;white-space:pre">0.6</div>
<div style="position:absolute;left:1294.5px;width:100px;text-align:center;top:1380.3px;font-family:'Liberation Sans', sans-serif;font-size:28px;line-height:28px;color:#fff;white-space:pre">0.7</div>
<div style="position:absolute;left:1466.5px;width:100px;text-align:center;top:1380.3px;font-family:'Liberation Sans', sans-serif;font-size:28px;line-height:28px;color:#fff;white-space:pre">0.8</div>
<div style="position:absolute;left:1638.5px;width:100px;text-align:center;top:1380.3px;font-family:'Liberation Sans', sans-serif;font-size:28px;line-height:28px;color:#fff;white-space:pre">0.9</div>
<div style="position:absolute;left:1810.5px;width:100px;text-align:center;top:1380.3px;font-family:'Liberation Sans', sans-serif;font-size:28px;line-height:28px;color:#fff;white-space:pre">1.0</div>
<div style="position:absolute;left:69px;top:318.6px;font-family:'Liberation Sans', sans-serif;font-size:30px;line-height:30px;color:#ffffff;font-weight:400;white-space:pre;">Voltage (V)</div>
<div style="position:absolute;left:1788px;top:319.5px;font-family:'Liberation Sans', sans-serif;font-size:29px;line-height:29px;color:#ffffff;font-weight:400;white-space:pre;">Current (A)</div>
<div style="position:absolute;left:901px;width:200px;text-align:center;top:1417.5px;font-family:'Liberation Sans', sans-serif;font-size:29px;line-height:29px;color:#fff;white-space:pre">Time (ms)</div>
<div style="position:absolute;left:0px;top:1475px;width:2004px;height:325px;background:#272727;"></div>
<div style="position:absolute;left:2px;top:1479.0px;font-family:'Liberation Mono', monospace;font-size:30px;line-height:30px;color:#ffffff;font-weight:400;white-space:pre;">v1#branch                           -0.0125852</div>
<div style="position:absolute;left:2px;top:1515.0px;font-family:'Liberation Mono', monospace;font-size:30px;line-height:30px;color:#ffffff;font-weight:400;white-space:pre;">v2#branch                                    0</div>
<div style="position:absolute;left:2px;top:1551.0px;font-family:'Liberation Mono', monospace;font-size:30px;line-height:30px;color:#ffffff;font-weight:400;white-space:pre;">xq1:3#branch                        -0.0125852</div>
<div style="position:absolute;left:2px;top:1587.0px;font-family:'Liberation Mono', monospace;font-size:30px;line-height:30px;color:#ffffff;font-weight:400;white-space:pre;">xq1:2#branch                                 0</div>
<div style="position:absolute;left:2px;top:1623.0px;font-family:'Liberation Mono', monospace;font-size:30px;line-height:30px;color:#ffffff;font-weight:400;white-space:pre;">xq1:1#branch                         0.0125852</div>
<div style="position:absolute;left:2px;top:1659.0px;font-family:'Liberation Mono', monospace;font-size:30px;line-height:30px;color:#ffffff;font-weight:400;white-space:pre;">r1#branch                            0.0125852</div>
<div style="position:absolute;left:2px;top:1695.0px;font-family:'Liberation Mono', monospace;font-size:30px;line-height:30px;color:#ffffff;font-weight:400;white-space:pre;"> Reference value :  0.00000e+00</div>
<div style="position:absolute;left:2px;top:1731.0px;font-family:'Liberation Mono', monospace;font-size:30px;line-height:30px;color:#ffffff;font-weight:400;white-space:pre;">No. of Data Rows : 1008</div>
<div style="position:absolute;left:2016px;top:247px;width:864px;height:1553px;background:#191919;"></div>
<div style="position:absolute;left:2016px;top:247px;width:864px;height:67px;background:#2c2c2c;"></div>
<div style="position:absolute;left:2017px;top:246px;width:863px;height:68px;background:#262626;box-sizing:border-box;border:2px solid #1a1a1a;border-radius:10px"></div>
<svg style="position:absolute;left:2030px;top:260px;" width="40" height="40" viewBox="0 0 40 40"><circle cx="18" cy="18" r="10.8" fill="none" stroke="#d4d4d4" stroke-width="2"/><path d="M25.5 25.5 L31.5 31.5" stroke="#d4d4d4" stroke-width="2.6"/></svg>
<div style="position:absolute;left:2079px;top:265.1px;font-family:'Liberation Sans', sans-serif;font-size:30px;line-height:30px;color:#8e8e8e;font-weight:400;white-space:pre;">Filter</div>
<div style="position:absolute;left:2016px;top:314px;width:864px;height:46px;background:#383838;"></div>
<div style="position:absolute;left:2016px;top:360px;width:864px;height:303px;background:#262626;"></div>
<div style="position:absolute;left:2022px;top:323.5px;font-family:'Liberation Sans', sans-serif;font-size:29px;line-height:29px;color:#ffffff;font-weight:400;white-space:pre;">Signal</div>
<div style="position:absolute;left:2434px;top:323.5px;font-family:'Liberation Sans', sans-serif;font-size:29px;line-height:29px;color:#ffffff;font-weight:400;white-space:pre;letter-spacing:0.3px">Plot Color</div>
<div style="position:absolute;left:2570px;top:323.5px;font-family:'Liberation Sans', sans-serif;font-size:29px;line-height:29px;color:#ffffff;font-weight:400;white-space:pre;letter-spacing:0.3px">Cursor 1</div>
<div style="position:absolute;left:2680px;top:323.5px;font-family:'Liberation Sans', sans-serif;font-size:29px;line-height:29px;color:#ffffff;font-weight:400;white-space:pre;letter-spacing:0.3px">Cursor 2</div>
<div style="position:absolute;left:2016px;top:407px;width:776px;height:2px;background:#353535;"></div>
<div style="position:absolute;left:2019px;top:370.0px;font-family:'Liberation Sans', sans-serif;font-size:29px;line-height:29px;color:#ffffff;font-weight:400;white-space:pre;">V(/VIN)</div>
<div style="position:absolute;left:2016px;top:457px;width:776px;height:2px;background:#353535;"></div>
<div style="position:absolute;left:2019px;top:420.0px;font-family:'Liberation Sans', sans-serif;font-size:29px;line-height:29px;color:#ffffff;font-weight:400;white-space:pre;">V(/VOUT)</div>
<div style="position:absolute;left:2016px;top:507px;width:776px;height:2px;background:#353535;"></div>
<div style="position:absolute;left:2019px;top:470.0px;font-family:'Liberation Sans', sans-serif;font-size:29px;line-height:29px;color:#ffffff;font-weight:400;white-space:pre;">V(VDD)</div>
<div style="position:absolute;left:2016px;top:557px;width:776px;height:2px;background:#353535;"></div>
<div style="position:absolute;left:2019px;top:520.0px;font-family:'Liberation Sans', sans-serif;font-size:29px;line-height:29px;color:#ffffff;font-weight:400;white-space:pre;">I(R1)</div>
<div style="position:absolute;left:2016px;top:607px;width:776px;height:2px;background:#353535;"></div>
<div style="position:absolute;left:2019px;top:570.0px;font-family:'Liberation Sans', sans-serif;font-size:29px;line-height:29px;color:#ffffff;font-weight:400;white-space:pre;">I(V1)</div>
<div style="position:absolute;left:2016px;top:657px;width:776px;height:2px;background:#353535;"></div>
<div style="position:absolute;left:2019px;top:620.0px;font-family:'Liberation Sans', sans-serif;font-size:29px;line-height:29px;color:#ffffff;font-weight:400;white-space:pre;">I(V2)</div>
<div style="position:absolute;left:2427px;top:360px;width:2px;height:300px;background:#353535;"></div>
<div style="position:absolute;left:2493px;top:360px;width:2px;height:300px;background:#353535;"></div>
<div style="position:absolute;left:2569px;top:360px;width:2px;height:300px;background:#353535;"></div>
<div style="position:absolute;left:2679px;top:360px;width:2px;height:300px;background:#353535;"></div>
<div style="position:absolute;left:2790px;top:360px;width:2px;height:300px;background:#353535;"></div>
<svg style="position:absolute;left:2446px;top:368px;" width="33" height="33" viewBox="0 0 33 33"><rect x="0.5" y="0.5" width="32" height="32" rx="6" fill="#e95420"/><path d="M5.5 14.5 L14 23 L27 9.5" fill="none" stroke="#ffffff" stroke-width="4"/></svg>
<svg style="position:absolute;left:2611px;top:368px;" width="33" height="33" viewBox="0 0 33 33"><rect x="1" y="1" width="30" height="30" rx="6" fill="#373737" stroke="#1e1e1e" stroke-width="2"/></svg>
<svg style="position:absolute;left:2720px;top:368px;" width="33" height="33" viewBox="0 0 33 33"><rect x="1" y="1" width="30" height="30" rx="6" fill="#373737" stroke="#1e1e1e" stroke-width="2"/></svg>
<svg style="position:absolute;left:2446px;top:418px;" width="33" height="33" viewBox="0 0 33 33"><rect x="0.5" y="0.5" width="32" height="32" rx="6" fill="#e95420"/><path d="M5.5 14.5 L14 23 L27 9.5" fill="none" stroke="#ffffff" stroke-width="4"/></svg>
<svg style="position:absolute;left:2611px;top:418px;" width="33" height="33" viewBox="0 0 33 33"><rect x="1" y="1" width="30" height="30" rx="6" fill="#373737" stroke="#1e1e1e" stroke-width="2"/></svg>
<svg style="position:absolute;left:2720px;top:418px;" width="33" height="33" viewBox="0 0 33 33"><rect x="1" y="1" width="30" height="30" rx="6" fill="#373737" stroke="#1e1e1e" stroke-width="2"/></svg>
<svg style="position:absolute;left:2446px;top:468px;" width="33" height="33" viewBox="0 0 33 33"><rect x="1" y="1" width="30" height="30" rx="6" fill="#373737" stroke="#1e1e1e" stroke-width="2"/></svg>
<svg style="position:absolute;left:2446px;top:518px;" width="33" height="33" viewBox="0 0 33 33"><rect x="1" y="1" width="30" height="30" rx="6" fill="#373737" stroke="#1e1e1e" stroke-width="2"/></svg>
<svg style="position:absolute;left:2446px;top:568px;" width="33" height="33" viewBox="0 0 33 33"><rect x="1" y="1" width="30" height="30" rx="6" fill="#373737" stroke="#1e1e1e" stroke-width="2"/></svg>
<svg style="position:absolute;left:2446px;top:618px;" width="33" height="33" viewBox="0 0 33 33"><rect x="1" y="1" width="30" height="30" rx="6" fill="#373737" stroke="#1e1e1e" stroke-width="2"/></svg>
<div style="position:absolute;left:2496px;top:360px;width:73px;height:47px;background:#e41a1c;"></div>
<div style="position:absolute;left:2496px;top:410px;width:73px;height:47px;background:#377eb8;"></div>
<svg style="position:absolute;left:2480px;top:425px;" width="40" height="52" viewBox="0 0 40 52"><path d="M9.5 9 V42.5 L17.5 34 L22.5 44.5 Q24.5 47 27 44.5 L22.5 33 H33 Z" fill="#333333" stroke="#ffffff" stroke-width="2.2" stroke-linejoin="miter"/></svg>
<div style="position:absolute;left:2016px;top:674px;width:864px;height:46px;background:#383838;"></div>
<div style="position:absolute;left:2016px;top:720px;width:864px;height:281px;background:#262626;"></div>
<div style="position:absolute;left:2022px;top:683.5px;width:82px;overflow:hidden;font-family:'Liberation Sans', sans-serif;font-size:29px;line-height:29px;color:#fff;white-space:pre">Cursor</div>
<div style="position:absolute;left:2226px;top:683.5px;font-family:'Liberation Sans', sans-serif;font-size:29px;line-height:29px;color:#ffffff;font-weight:400;white-space:pre;">Signal</div>
<div style="position:absolute;left:2486px;top:683.5px;font-family:'Liberation Sans', sans-serif;font-size:29px;line-height:29px;color:#ffffff;font-weight:400;white-space:pre;">Time</div>
<div style="position:absolute;left:2663px;top:683.5px;font-family:'Liberation Sans', sans-serif;font-size:29px;line-height:29px;color:#ffffff;font-weight:400;white-space:pre;">Value</div>
<div style="position:absolute;left:2016px;top:1012px;width:864px;height:46px;background:#383838;"></div>
<div style="position:absolute;left:2016px;top:1058px;width:864px;height:218px;background:#262626;"></div>
<div style="position:absolute;left:2022px;top:1021.5px;font-family:'Liberation Sans', sans-serif;font-size:29px;line-height:29px;color:#ffffff;font-weight:400;white-space:pre;letter-spacing:0.6px">Measurement</div>
<div style="position:absolute;left:2663px;top:1021.5px;font-family:'Liberation Sans', sans-serif;font-size:29px;line-height:29px;color:#ffffff;font-weight:400;white-space:pre;">Value</div>
<div style="position:absolute;left:2016px;top:1105px;width:773px;height:2px;background:#353535;"></div>
<div style="position:absolute;left:2607px;top:1058px;width:2px;height:49px;background:#353535;"></div>
<div style="position:absolute;left:2787px;top:1058px;width:2px;height:49px;background:#353535;"></div>
<div style="position:absolute;left:2016px;top:1286px;width:864px;height:514px;background:#2c2c2c;"></div></body></html>
